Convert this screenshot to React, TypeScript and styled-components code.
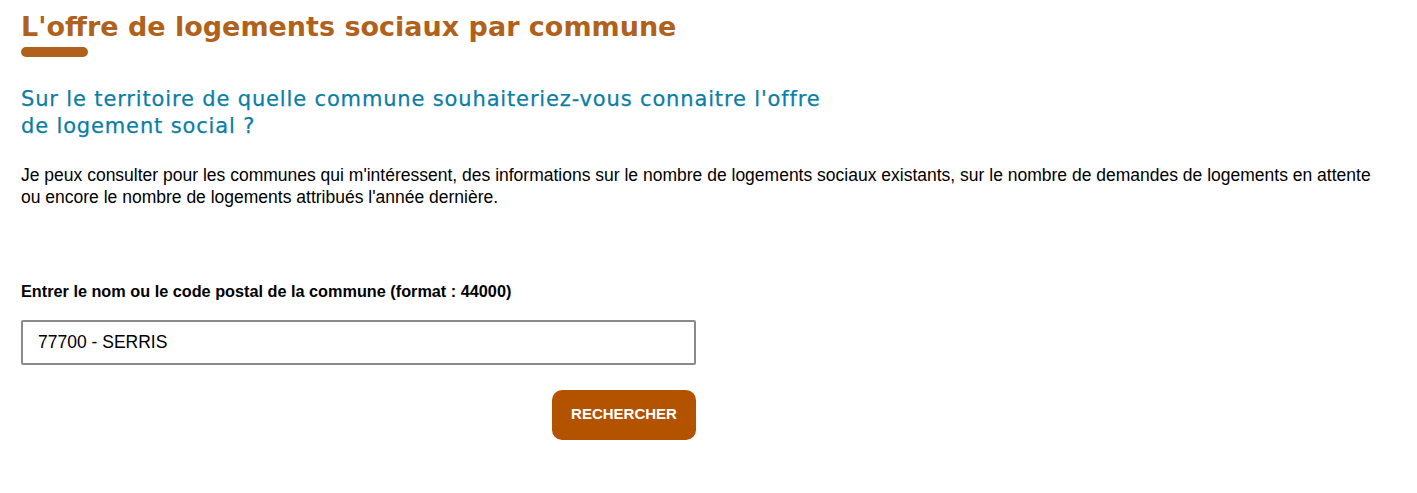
import React from "react";
import styled, { createGlobalStyle } from "styled-components";

const Global = createGlobalStyle`
  html, body { margin: 0; padding: 0; background: #fff; }
  body { font-family: "Liberation Sans", Arial, sans-serif; }
`;

const Page = styled.main`
  padding: 8px 21px 0 21px;
  display: flex;
  flex-direction: column;
`;

const Title = styled.h1`
  margin: 0;
  font-family: "DejaVu Sans", "Open Sans", sans-serif;
  font-weight: 700;
  font-size: 27px;
  line-height: 38px;
  color: #b0621c;
`;

const Underline = styled.span`
  display: block;
  width: 67px;
  height: 10px;
  border-radius: 5px;
  background: #b0621c;
  margin-top: 1px;
`;

const Question = styled.h2`
  margin: 29px 0 0 0;
  font-family: "DejaVu Sans", "Open Sans", sans-serif;
  font-weight: 400;
  font-size: 21px;
  line-height: 27px;
  letter-spacing: 0.85px;
  color: #0b7ea6;
  max-width: 900px;
  -webkit-text-stroke: 0.25px #0b7ea6;
`;

const Intro = styled.p`
  margin: 24px 0 0 0;
  font-size: 17.5px;
  line-height: 22px;
  color: #000;
  max-width: 1360px;
`;

const Form = styled.form`
  margin-top: 74px;
  width: 675px;
  display: flex;
  flex-direction: column;
`;

const Label = styled.label`
  font-weight: 700;
  font-size: 16.25px;
  line-height: 18px;
  color: #000;
`;

const Input = styled.input`
  margin-top: 20px;
  box-sizing: border-box;
  width: 100%;
  height: 45px;
  border: 2px solid #8a8a8a;
  border-radius: 2px;
  padding: 0 15px;
  font-family: "Liberation Sans", Arial, sans-serif;
  font-size: 17.5px;
  color: #000;
  outline: none;
`;

const Actions = styled.div`
  margin-top: 25px;
  display: flex;
  justify-content: flex-end;
`;

const Button = styled.button`
  width: 144px;
  height: 50px;
  padding: 0 0 3px 0;
  border: none;
  border-radius: 10px;
  background: #b35300;
  color: #fff;
  font-family: "Liberation Sans", Arial, sans-serif;
  font-weight: 700;
  font-size: 15px;
  cursor: pointer;
`;

export default function App() {
  return (
    <>
      <Global />
      <Page>
        <Title>L'offre de logements sociaux par commune</Title>
        <Underline />
        <Question>
          Sur le territoire de quelle commune souhaiteriez-vous connaitre l'offre
          <br />
          de logement social ?
        </Question>
        <Intro>
          Je peux consulter pour les communes qui m'intéressent, des informations sur le nombre de logements sociaux existants, sur le nombre de demandes de logements en attente ou encore le nombre de logements attribués l'année dernière.
        </Intro>
        <Form onSubmit={(e) => e.preventDefault()}>
          <Label htmlFor="commune">Entrer le nom ou le code postal de la commune (format : 44000)</Label>
          <Input id="commune" defaultValue="77700 - SERRIS" />
          <Actions>
            <Button type="submit">RECHERCHER</Button>
          </Actions>
        </Form>
      </Page>
    </>
  );
}
